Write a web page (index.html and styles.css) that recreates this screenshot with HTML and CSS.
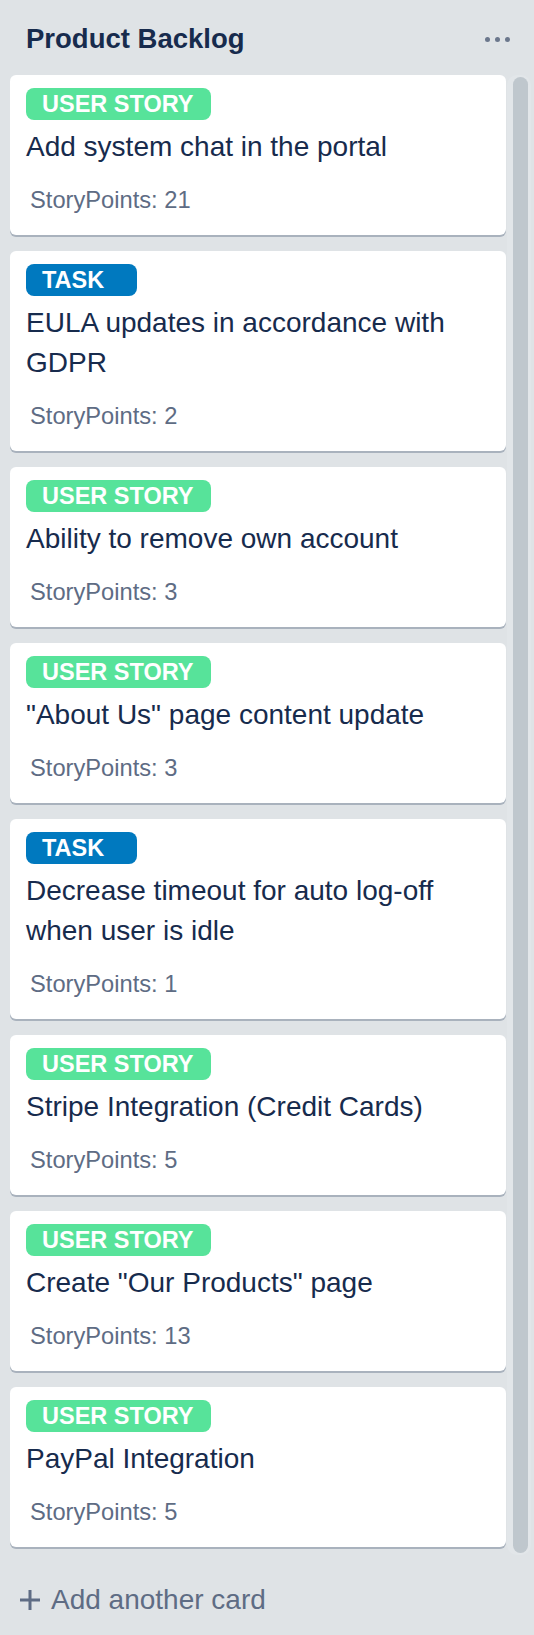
FILE: index.html
```html
<!DOCTYPE html>
<html lang="en">
<head>
<meta charset="utf-8">
<title>Product Backlog</title>
<link rel="stylesheet" href="styles.css">
</head>
<body>
<div class="list">
  <div class="list-header">
    <h2 class="list-title">Product Backlog</h2>
    <div class="menu" aria-label="List actions"><span></span><span></span><span></span></div>
  </div>
  <div class="list-body">
    <div class="cards">
      <div class="card">
        <span class="label story">USER STORY</span>
        <div class="title">Add system chat in the portal</div>
        <div class="points">StoryPoints: 21</div>
      </div>
      <div class="card">
        <span class="label task">TASK</span>
        <div class="title">EULA updates in accordance with GDPR</div>
        <div class="points">StoryPoints: 2</div>
      </div>
      <div class="card">
        <span class="label story">USER STORY</span>
        <div class="title">Ability to remove own account</div>
        <div class="points">StoryPoints: 3</div>
      </div>
      <div class="card">
        <span class="label story">USER STORY</span>
        <div class="title">"About Us" page content update</div>
        <div class="points">StoryPoints: 3</div>
      </div>
      <div class="card">
        <span class="label task">TASK</span>
        <div class="title">Decrease timeout for auto log-off when user is idle</div>
        <div class="points">StoryPoints: 1</div>
      </div>
      <div class="card">
        <span class="label story">USER STORY</span>
        <div class="title">Stripe Integration (Credit Cards)</div>
        <div class="points">StoryPoints: 5</div>
      </div>
      <div class="card">
        <span class="label story">USER STORY</span>
        <div class="title">Create "Our Products" page</div>
        <div class="points">StoryPoints: 13</div>
      </div>
      <div class="card">
        <span class="label story">USER STORY</span>
        <div class="title">PayPal Integration</div>
        <div class="points">StoryPoints: 5</div>
      </div>
    </div>
    <div class="scrollbar"><div class="thumb"></div></div>
  </div>
  <div class="add-card">
    <svg class="plus" width="22" height="22" viewBox="0 0 22 22" aria-hidden="true">
      <path d="M11 1v20M1 11h20" stroke="#5e6c84" stroke-width="3" fill="none"/>
    </svg>
    <span>Add another card</span>
  </div>
</div>
</body>
</html>
```

FILE: styles.css
```css
html, body {
  margin: 0;
  padding: 0;
  background: #dfe3e6;
}

body {
  width: 534px;
  height: 1635px;
  overflow: hidden;
  font-family: "Liberation Sans", Arial, sans-serif;
}

.list {
  display: flex;
  flex-direction: column;
}

.list-header {
  display: flex;
  align-items: center;
  justify-content: space-between;
  padding: 19px 24px 0 26px;
  height: 40px;
}

.list-title {
  margin: 0;
  font-size: 27.5px;
  line-height: 40px;
  font-weight: bold;
  color: #172b4d;
}

.menu {
  display: flex;
  gap: 5px;
  margin-top: 1px;
}

.menu span {
  width: 5px;
  height: 5px;
  border-radius: 50%;
  background: #6b778c;
}

.list-body {
  display: flex;
  margin-top: 16px;
  padding-left: 10px;
}

.cards {
  width: 496px;
  display: flex;
  flex-direction: column;
  gap: 16px;
}

.card {
  background: #fff;
  border-radius: 6px;
  box-shadow: 0 2px 0 rgba(9, 30, 66, 0.25);
  padding: 13px 16px 19px;
  display: flex;
  flex-direction: column;
  align-items: flex-start;
}

.label {
  display: inline-block;
  box-sizing: border-box;
  min-width: 111px;
  height: 32px;
  line-height: 32px;
  padding: 0 18px 0 16px;
  border-radius: 8px;
  color: #fff;
  font-weight: bold;
  font-size: 23.5px;
}

.label.story {
  background: #57e39a;
}

.label.task {
  background: #0079bf;
}

.title {
  margin-top: 7px;
  font-size: 28px;
  line-height: 40px;
  color: #172b4d;
}

.points {
  margin-top: 17px;
  padding-left: 4px;
  font-size: 23.7px;
  line-height: 32px;
  color: #5e6c84;
}

.scrollbar {
  width: 24px;
  margin: 0 0 -8px 1px;
  padding: 2px 0;
  display: flex;
  justify-content: center;
  border-radius: 10px;
  background: #e2e6e9;
}

.thumb {
  width: 15px;
  margin-left: 2px;
  border-radius: 8px;
  background: #bfc7cd;
}

.add-card {
  display: flex;
  align-items: center;
  gap: 10px;
  margin-top: 33px;
  padding-left: 19px;
  height: 40px;
  font-size: 28px;
  line-height: 40px;
  color: #5e6c84;
}

.plus {
  flex: none;
}
```
